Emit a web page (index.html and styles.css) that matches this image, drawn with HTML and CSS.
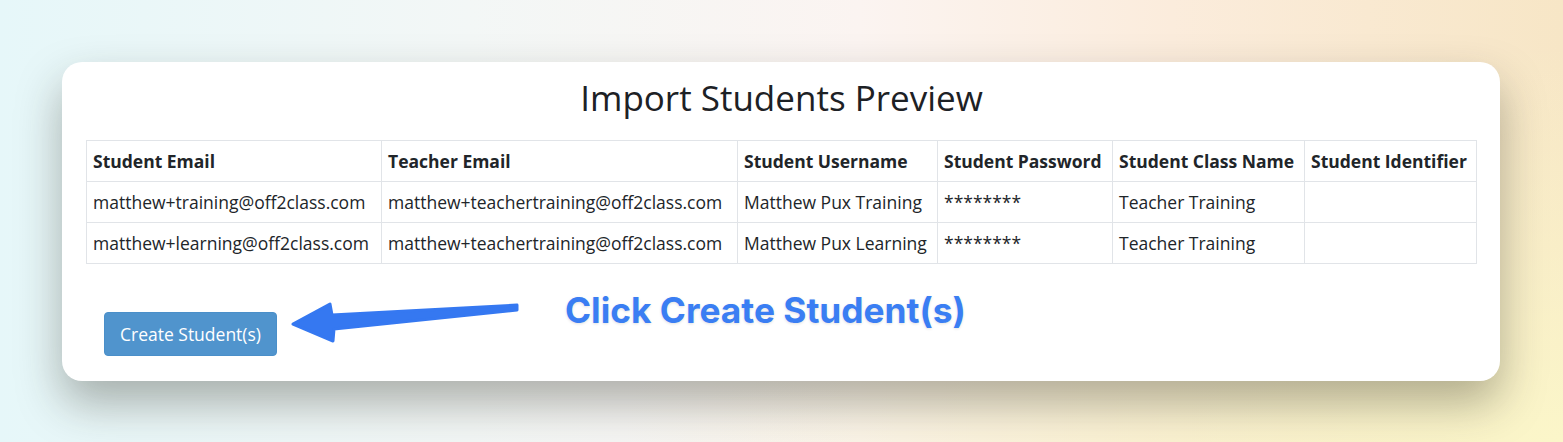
FILE: index.html
```html
<!DOCTYPE html>
<html lang="en">
<head>
	<meta charset="UTF-8">
	<title>Import Students Preview</title>
	<link rel="stylesheet" href="styles.css">
</head>
<body>
	<div class="card">
		<h1 class="titulo">Import Students Preview</h1>
		<table class="tabla">
			<colgroup>
				<col class="c1"><col class="c2"><col class="c3"><col class="c4"><col class="c5"><col class="c6">
			</colgroup>
			<tr>
				<th>Student Email</th>
				<th>Teacher Email</th>
				<th>Student Username</th>
				<th>Student Password</th>
				<th>Student Class Name</th>
				<th>Student Identifier</th>
			</tr>
			<tr>
				<td>matthew+training@off2class.com</td>
				<td>matthew+teachertraining@off2class.com</td>
				<td>Matthew Pux Training</td>
				<td class="pass">********</td>
				<td>Teacher Training</td>
				<td></td>
			</tr>
			<tr>
				<td>matthew+learning@off2class.com</td>
				<td>matthew+teachertraining@off2class.com</td>
				<td>Matthew Pux Learning</td>
				<td class="pass">********</td>
				<td>Teacher Training</td>
				<td></td>
			</tr>
		</table>
		<div class="acciones">
			<button class="btnCrear">Create Student(s)</button>
			<svg class="flecha" width="232" height="42" viewBox="0 0 232 42">
				<path d="M3 23 L40 3 L42 14 L227 4 L227 9 L44 28 L43 40 Z" fill="#3578f1" stroke="#3578f1" stroke-width="3" stroke-linejoin="round"/>
			</svg>
			<p class="nota">Click Create Student(s)</p>
		</div>
	</div>
</body>
</html>
```

FILE: styles.css
```css
*{
	margin:0;
	padding:0;
	box-sizing: border-box;
}
html, body{
	height: 100%;
}
body{
	padding: 62px 63px 0 62px;
	font-family: "Open Sans", Arial, sans-serif;
	font-size: 17.5px;
	color: #212529;
	background:
		radial-gradient(ellipse 60% 90% at 100% 100%, #fbf6c9 0%, rgba(251,246,201,0) 100%),
		linear-gradient(90deg, #e6f7f9 0%, #f3f7f6 30%, #fbf4f1 55%, #fbecdc 75%, #f7e6c6 100%);
	overflow: hidden;
}
.card{
	background: #fff;
	border-radius: 20px;
	padding: 15px 23px 25px 24px;
	box-shadow: 0 22px 45px rgba(40,40,30,.35);
}
.titulo{
	font-weight: 400;
	font-size: 35px;
	line-height: 42px;
	text-align: center;
	margin-bottom: 21px;
	color: #1d2125;
}
.tabla{
	width: 100%;
	border-collapse: collapse;
	table-layout: fixed;
}
.tabla .c1{ width: 295px; }
.tabla .c2{ width: 356px; }
.tabla .c3{ width: 200px; }
.tabla .c4{ width: 175px; }
.tabla .c5{ width: 192px; }
.tabla th, .tabla td{
	border: 1px solid #e1e4e8;
	padding: 8px 6px;
	line-height: 24px;
	text-align: left;
	white-space: nowrap;
	overflow: hidden;
	vertical-align: top;
}
.tabla th{
	font-weight: 700;
}
.acciones{
	display: flex;
	align-items: flex-start;
	margin-top: 25px;
	padding-left: 18px;
}
.btnCrear{
	margin-top: 23px;
	width: 173px;
	padding: 9px 0;
	border: 1px solid #4a8fc9;
	border-radius: 4px;
	background: #5094cd;
	color: #fff;
	font-family: "Open Sans", Arial, sans-serif;
	font-size: 17.5px;
	line-height: 24px;
	cursor: pointer;
}
.flecha{
	margin-top: 12px;
	margin-left: 13px;
	flex-shrink: 0;
}
.nota{
	margin-left: 43px;
	font-family: Inter, "Liberation Sans", sans-serif;
	font-weight: 700;
	font-size: 35.3px;
	line-height: 44px;
	color: #3a7ef3;
	text-shadow: 0 1px 3px rgba(0,0,0,.12);
}
```
